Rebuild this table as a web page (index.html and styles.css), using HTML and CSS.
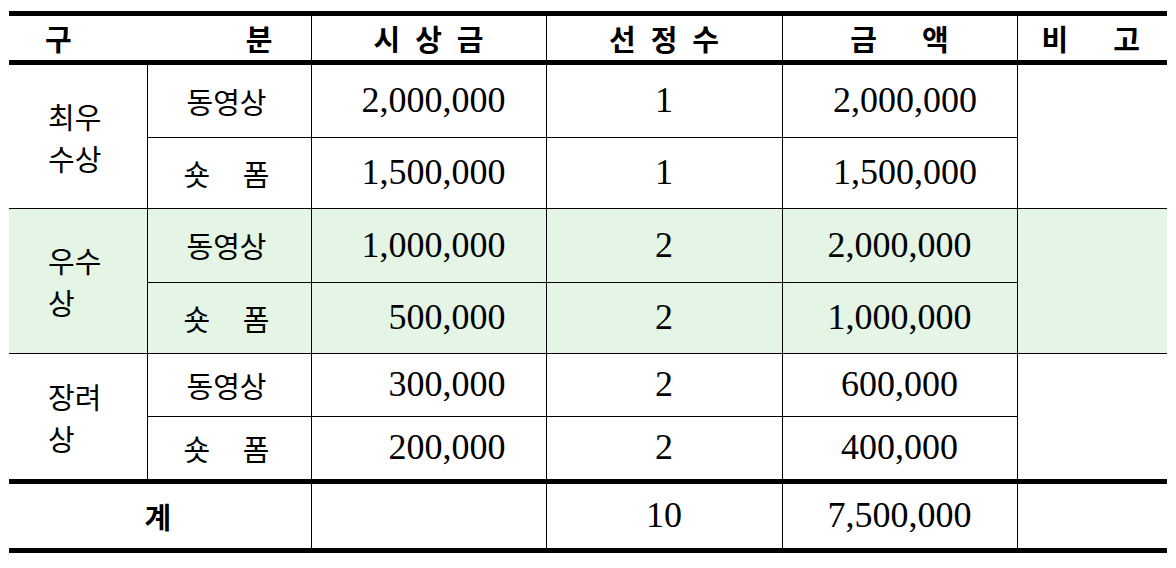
FILE: index.html
```html
<!DOCTYPE html>
<html lang="ko">
<head>
<meta charset="utf-8">
<title>시상금</title>
<link rel="stylesheet" href="styles.css">
</head>
<body>
<table class="award">
  <colgroup>
    <col class="c1"><col class="c2"><col class="c3"><col class="c4"><col class="c5"><col class="c6">
  </colgroup>
  <thead>
    <tr class="r-head">
      <th colspan="2" class="edge-l"><div class="spread gubun"><span>구</span><span>분</span></div></th>
      <th><div class="letters tight"><span>시</span><span>상</span><span>금</span></div></th>
      <th><div class="letters tight"><span>선</span><span>정</span><span>수</span></div></th>
      <th><div class="letters wide"><span>금</span><span>액</span></div></th>
      <th class="edge-r"><div class="letters wide bigo"><span>비</span><span>고</span></div></th>
    </tr>
  </thead>
  <tbody>
    <tr class="r1">
      <td rowspan="2" class="edge-l ko group">최우<br>수상</td>
      <td class="ko sub">동영상</td>
      <td class="num">2,000,000</td>
      <td class="cnt">1</td>
      <td class="amt shift">2,000,000</td>
      <td rowspan="2" class="edge-r"></td>
    </tr>
    <tr class="r2">
      <td class="ko sub"><div class="short"><span>숏</span><span>폼</span></div></td>
      <td class="num">1,500,000</td>
      <td class="cnt">1</td>
      <td class="amt shift">1,500,000</td>
    </tr>
    <tr class="r3 green">
      <td rowspan="2" class="edge-l ko group">우수<br>상</td>
      <td class="ko sub">동영상</td>
      <td class="num">1,000,000</td>
      <td class="cnt">2</td>
      <td class="amt">2,000,000</td>
      <td rowspan="2" class="edge-r"></td>
    </tr>
    <tr class="r4 green">
      <td class="ko sub"><div class="short"><span>숏</span><span>폼</span></div></td>
      <td class="num">500,000</td>
      <td class="cnt">2</td>
      <td class="amt">1,000,000</td>
    </tr>
    <tr class="r5">
      <td rowspan="2" class="edge-l ko group">장려<br>상</td>
      <td class="ko sub">동영상</td>
      <td class="num">300,000</td>
      <td class="cnt">2</td>
      <td class="amt">600,000</td>
      <td rowspan="2" class="edge-r"></td>
    </tr>
    <tr class="r6">
      <td class="ko sub"><div class="short"><span>숏</span><span>폼</span></div></td>
      <td class="num">200,000</td>
      <td class="cnt">2</td>
      <td class="amt">400,000</td>
    </tr>
    <tr class="r-total">
      <td colspan="2" class="edge-l ko total-label">계</td>
      <td></td>
      <td class="cnt">10</td>
      <td class="amt">7,500,000</td>
      <td class="edge-r"></td>
    </tr>
  </tbody>
</table>
</body>
</html>
```

FILE: styles.css
```css
* {
  box-sizing: border-box;
}

body {
  margin: 0;
  background: #ffffff;
}

.award {
  margin: 11px 0 0 9px;
  border-collapse: collapse;
  table-layout: fixed;
  width: 1158px;
  font-family: "Liberation Serif", "Noto Sans CJK KR", serif;
  font-size: 36px;
  color: #000000;
}

.c1 { width: 138px; }
.c2 { width: 164px; }
.c3 { width: 235px; }
.c4 { width: 236px; }
.c5 { width: 235px; }
.c6 { width: 150px; }

.award th,
.award td {
  border: 1px solid #000000;
  padding: 0;
  vertical-align: middle;
  line-height: 1.2;
  font-weight: normal;
}

.award th {
  border-top: 5px solid #000000;
  border-bottom: 5px solid #000000;
  font-family: "Noto Sans CJK KR", sans-serif;
  font-size: 29px;
  font-weight: 700;
}

.award .edge-l { border-left: 0; }
.award .edge-r { border-right: 0; }

.r-head { height: 49px; }
.r1 { height: 75px; }
.r2 { height: 71px; }
.r3 { height: 74px; }
.r4 { height: 71px; }
.r5 { height: 63px; }
.r6 { height: 65px; }
.r-total { height: 69px; }

.award .r-total td {
  border-top: 5px solid #000000;
  border-bottom: 5px solid #000000;
}

.award .green td {
  background: #e4f4e5;
}

.spread {
  display: flex;
  justify-content: space-between;
}

.gubun {
  padding: 0 38px 0 36px;
}

.letters {
  display: flex;
  justify-content: center;
}

.tight { gap: 15px; }
.wide { gap: 45px; }

.bigo {
  justify-content: flex-start;
  padding-left: 24px;
}

.award .ko {
  font-family: "Noto Sans CJK KR", sans-serif;
  font-size: 29px;
}

.award .group {
  text-align: left;
  padding-left: 39px;
  line-height: 42px;
}

.award .sub {
  text-align: center;
  padding-right: 5px;
}

.short {
  display: flex;
  justify-content: space-between;
  width: 86px;
  margin: 0 auto;
}

.award .num {
  text-align: right;
  padding-right: 40px;
}

.award .cnt {
  text-align: center;
}

.award .amt {
  text-align: center;
}

.award .amt.shift {
  padding-left: 11px;
}

.award .total-label {
  text-align: center;
  font-weight: 700;
  padding-right: 4px;
}
```
